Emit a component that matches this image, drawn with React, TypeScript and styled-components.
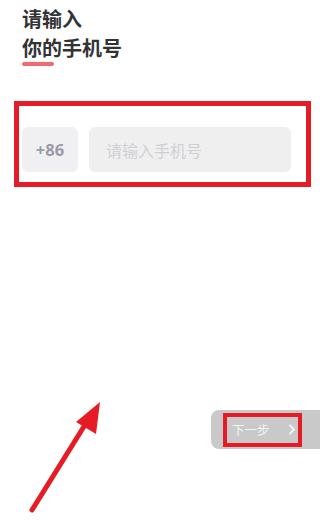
import React, { FC } from "react";
import styled, { createGlobalStyle } from "styled-components";

const GlobalStyle = createGlobalStyle`
  html, body {
    margin: 0;
    padding: 0;
    background: #fff;
  }
  * {
    box-sizing: border-box;
  }
`;

const font = `"Noto Sans CJK SC", "Noto Sans", sans-serif`;

const Styled = {
  Page: styled.div`
    position: relative;
    width: 326px;
    height: 520px;
    display: flex;
    flex-direction: column;
    padding: 4px 0 0 22px;
    overflow: hidden;
    font-family: ${font};
    background: #fff;
  `,
  Title: styled.h1`
    margin: 0;
    font-size: 20px;
    line-height: 29px;
    font-weight: 700;
    color: #333336;
  `,
  Underline: styled.span`
    display: block;
    width: 32px;
    height: 4px;
    margin-top: 0;
    border-radius: 2px;
    background: #f26a6c;
  `,
  PhoneRow: styled.div`
    display: flex;
    gap: 11px;
    margin-top: 61px;
  `,
  Code: styled.div`
    width: 56px;
    height: 45px;
    display: flex;
    align-items: center;
    justify-content: center;
    border-radius: 6px;
    background: #f0f0f2;
    color: #9b9aa8;
    font-family: "Open Sans", ${font};
    font-size: 16.5px;
    font-weight: 700;
  `,
  Input: styled.input`
    width: 202px;
    height: 45px;
    border: none;
    outline: none;
    border-radius: 6px;
    background: #efeff0;
    padding: 0 0 0 17px;
    font-family: ${font};
    font-size: 16px;
    color: #333;

    &::placeholder {
      color: #cfcfd3;
    }
  `,
  Footer: styled.div`
    margin-top: auto;
    margin-bottom: 71px;
    display: flex;
    justify-content: flex-end;
    padding-right: 6px;
  `,
  NextButton: styled.button`
    width: 109px;
    height: 39px;
    display: flex;
    align-items: center;
    gap: 18px;
    padding: 0 0 0 21px;
    border: none;
    border-radius: 8px 0 0 8px;
    background: #c9c9c9;
    color: #f4f4f4;
    font-family: ${font};
    font-size: 12.5px;
  `,
  Mark: styled.div<{ $x: number; $y: number; $w: number; $h: number; $b: number }>`
    position: absolute;
    left: ${(p) => p.$x}px;
    top: ${(p) => p.$y}px;
    width: ${(p) => p.$w}px;
    height: ${(p) => p.$h}px;
    border: ${(p) => p.$b}px solid #e51c25;
    pointer-events: none;
  `,
  Arrow: styled.svg`
    position: absolute;
    left: 0;
    top: 380px;
    pointer-events: none;
  `,
};

const Chevron: FC = () => (
  <svg width="8" height="11" viewBox="0 0 8 11">
    <path
      d="M2 1.5 L6 5.5 L2 9.5"
      fill="none"
      stroke="#f4f4f4"
      strokeWidth="1.8"
      strokeLinecap="round"
      strokeLinejoin="round"
    />
  </svg>
);

const App: FC = () => {
  return (
    <>
      <GlobalStyle />
      <Styled.Page>
        <Styled.Title>
          请输入
          <br />
          你的手机号
        </Styled.Title>
        <Styled.Underline />
        <Styled.PhoneRow>
          <Styled.Code>+86</Styled.Code>
          <Styled.Input placeholder="请输入手机号" />
        </Styled.PhoneRow>
        <Styled.Footer>
          <Styled.NextButton>
            <span>下一步</span>
            <Chevron />
          </Styled.NextButton>
        </Styled.Footer>

        <Styled.Mark $x={14} $y={101} $w={297} $h={86} $b={5} />
        <Styled.Mark $x={223} $y={413} $w={79} $h={34} $b={4} />
        <Styled.Arrow width="120" height="140" viewBox="0 380 120 140">
          <line
            x1="32"
            y1="510"
            x2="88"
            y2="420"
            stroke="#e51c25"
            strokeWidth="5"
            strokeLinecap="round"
          />
          <polygon points="100,402 76,422 96,434" fill="#e51c25" />
        </Styled.Arrow>
      </Styled.Page>
    </>
  );
};

export default App;
